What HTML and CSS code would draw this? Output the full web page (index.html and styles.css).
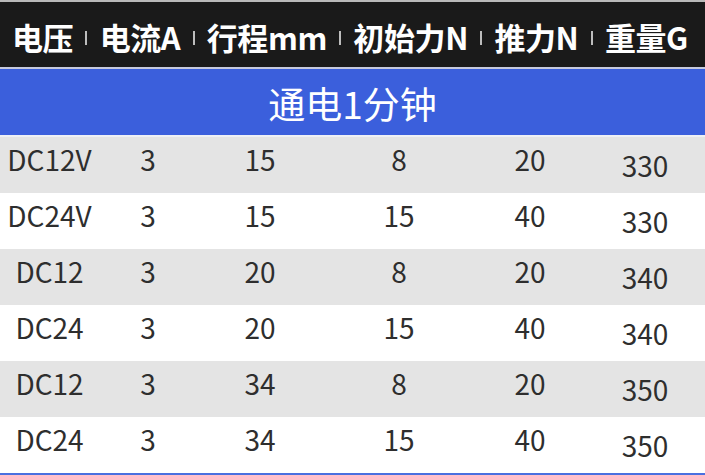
FILE: index.html
```html
<!DOCTYPE html>
<html lang="zh-CN">
<head>
<meta charset="utf-8">
<title>通电1分钟</title>
<link rel="stylesheet" href="styles.css">
</head>
<body>
<div class="sheet">
  <div class="head">
    <span class="lbl">电压</span><span class="sep"></span>
    <span class="lbl">电流A</span><span class="sep"></span>
    <span class="lbl">行程mm</span><span class="sep"></span>
    <span class="lbl">初始力N</span><span class="sep"></span>
    <span class="lbl">推力N</span><span class="sep"></span>
    <span class="lbl">重量G</span>
  </div>
  <div class="band">通电1分钟</div>
  <div class="rows">
    <div class="row gray"><span>DC12V</span><span>3</span><span>15</span><span>8</span><span>20</span><span class="wt">330</span></div>
    <div class="row"><span>DC24V</span><span>3</span><span>15</span><span>15</span><span>40</span><span class="wt">330</span></div>
    <div class="row gray"><span>DC12</span><span>3</span><span>20</span><span>8</span><span>20</span><span class="wt">340</span></div>
    <div class="row"><span>DC24</span><span>3</span><span>20</span><span>15</span><span>40</span><span class="wt">340</span></div>
    <div class="row gray"><span>DC12</span><span>3</span><span>34</span><span>8</span><span>20</span><span class="wt">350</span></div>
    <div class="row"><span>DC24</span><span>3</span><span>34</span><span>15</span><span>40</span><span class="wt">350</span></div>
  </div>
</div>
</body>
</html>
```
FILE: styles.css
```css
html, body {
  margin: 0;
  padding: 0;
  background: #ffffff;
}

.sheet {
  width: 705px;
  height: 475px;
  overflow: hidden;
  border-top: 2px solid #b9b9b9;
  box-sizing: border-box;
  font-family: "Noto Sans CJK SC", "Noto Sans", sans-serif;
}

.head {
  height: 65px;
  background: #1a1a1a;
  border-bottom: 2px solid #c6cade;
  display: flex;
  align-items: center;
  justify-content: space-between;
  padding: 0 17px 0 12px;
  color: #ffffff;
  font-weight: 700;
  font-size: 31px;
  letter-spacing: -0.4px;
}

.lbl {
  line-height: 1;
  padding-top: 4px;
}

.sep {
  width: 2px;
  height: 14px;
  margin-top: 6px;
  background: #bdbdbd;
}

.band {
  height: 68px;
  box-sizing: border-box;
  background: #3b5fdc;
  border-bottom: 2px solid #eef0f5;
  color: #ffffff;
  font-size: 37px;
  font-weight: 400;
  display: flex;
  align-items: center;
  justify-content: center;
  padding-top: 2px;
}

.rows {
  border-bottom: 2px solid #4a6fe0;
}

.row {
  height: 56px;
  display: grid;
  grid-template-columns: 99px 98px 126px 152px 110px 120px;
  align-items: center;
  justify-items: center;
  color: #2e2e2e;
  font-size: 28px;
  background: #ffffff;
}

.row.gray {
  background: #e4e4e4;
}

.row span {
  line-height: 1;
  padding-bottom: 12px;
}

.row span.wt {
  padding-bottom: 0;
}
```
